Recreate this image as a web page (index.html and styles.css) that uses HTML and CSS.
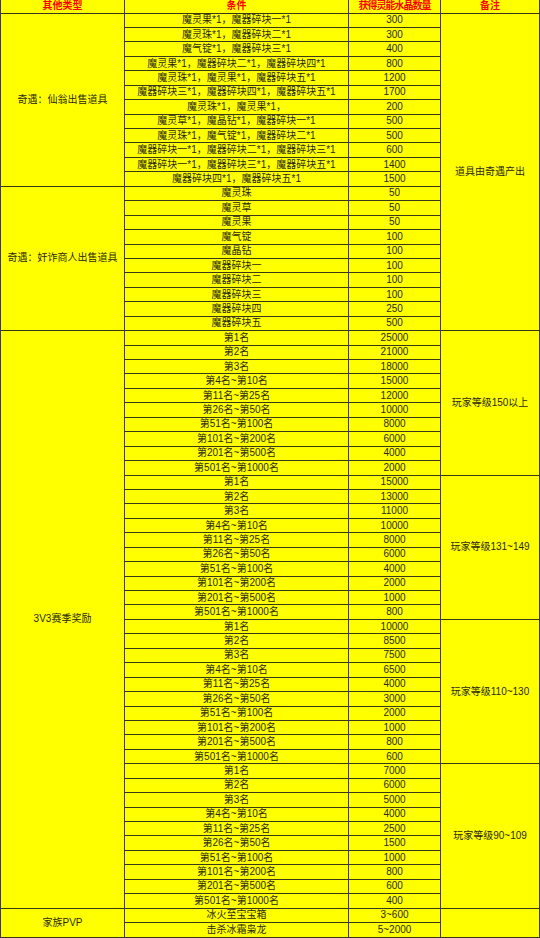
FILE: index.html
```html
<!DOCTYPE html>
<html lang="zh">
<head>
<meta charset="utf-8">
<title>灵能水晶获取</title>
<link rel="stylesheet" href="styles.css">
</head>
<body>
<table class="sheet">
<colgroup><col class="c1"><col class="c2"><col class="c3"><col class="c4"></colgroup>
<thead>
<tr class="head"><th>其他类型</th><th>条件</th><th class="narrow">获得灵能水晶数量</th><th>备注</th></tr>
</thead>
<tbody>
<tr><td rowspan="12">奇遇：仙翁出售道具</td><td>魔灵果*1，魔器碎块一*1</td><td>300</td><td rowspan="22">道具由奇遇产出</td></tr>
<tr><td>魔灵珠*1，魔器碎块二*1</td><td>300</td></tr>
<tr><td>魔气锭*1，魔器碎块三*1</td><td>400</td></tr>
<tr><td>魔灵果*1，魔器碎块二*1，魔器碎块四*1</td><td>800</td></tr>
<tr><td>魔灵珠*1，魔灵果*1，魔器碎块五*1</td><td>1200</td></tr>
<tr><td>魔器碎块三*1，魔器碎块四*1，魔器碎块五*1</td><td>1700</td></tr>
<tr><td>魔灵珠*1，魔灵果*1，</td><td>200</td></tr>
<tr><td>魔灵草*1，魔晶钻*1，魔器碎块一*1</td><td>500</td></tr>
<tr><td>魔灵珠*1，魔气锭*1，魔器碎块二*1</td><td>500</td></tr>
<tr><td>魔器碎块一*1，魔器碎块二*1，魔器碎块三*1</td><td>600</td></tr>
<tr><td>魔器碎块一*1，魔器碎块三*1，魔器碎块五*1</td><td>1400</td></tr>
<tr><td>魔器碎块四*1，魔器碎块五*1</td><td>1500</td></tr>

<tr><td rowspan="10">奇遇：奸诈商人出售道具</td><td>魔灵珠</td><td>50</td></tr>
<tr><td>魔灵草</td><td>50</td></tr>
<tr><td>魔灵果</td><td>50</td></tr>
<tr><td>魔气锭</td><td>100</td></tr>
<tr><td>魔晶钻</td><td>100</td></tr>
<tr><td>魔器碎块一</td><td>100</td></tr>
<tr><td>魔器碎块二</td><td>100</td></tr>
<tr><td>魔器碎块三</td><td>100</td></tr>
<tr><td>魔器碎块四</td><td>250</td></tr>
<tr><td>魔器碎块五</td><td>500</td></tr>

<tr><td rowspan="40">3V3赛季奖励</td><td>第1名</td><td>25000</td><td rowspan="10">玩家等级150以上</td></tr>
<tr><td>第2名</td><td>21000</td></tr>
<tr><td>第3名</td><td>18000</td></tr>
<tr><td>第4名~第10名</td><td>15000</td></tr>
<tr><td>第11名~第25名</td><td>12000</td></tr>
<tr><td>第26名~第50名</td><td>10000</td></tr>
<tr><td>第51名~第100名</td><td>8000</td></tr>
<tr><td>第101名~第200名</td><td>6000</td></tr>
<tr><td>第201名~第500名</td><td>4000</td></tr>
<tr><td>第501名~第1000名</td><td>2000</td></tr>

<tr><td>第1名</td><td>15000</td><td rowspan="10">玩家等级131~149</td></tr>
<tr><td>第2名</td><td>13000</td></tr>
<tr><td>第3名</td><td>11000</td></tr>
<tr><td>第4名~第10名</td><td>10000</td></tr>
<tr><td>第11名~第25名</td><td>8000</td></tr>
<tr><td>第26名~第50名</td><td>6000</td></tr>
<tr><td>第51名~第100名</td><td>4000</td></tr>
<tr><td>第101名~第200名</td><td>2000</td></tr>
<tr><td>第201名~第500名</td><td>1000</td></tr>
<tr><td>第501名~第1000名</td><td>800</td></tr>

<tr><td>第1名</td><td>10000</td><td rowspan="10">玩家等级110~130</td></tr>
<tr><td>第2名</td><td>8500</td></tr>
<tr><td>第3名</td><td>7500</td></tr>
<tr><td>第4名~第10名</td><td>6500</td></tr>
<tr><td>第11名~第25名</td><td>4000</td></tr>
<tr><td>第26名~第50名</td><td>3000</td></tr>
<tr><td>第51名~第100名</td><td>2000</td></tr>
<tr><td>第101名~第200名</td><td>1000</td></tr>
<tr><td>第201名~第500名</td><td>800</td></tr>
<tr><td>第501名~第1000名</td><td>600</td></tr>

<tr><td>第1名</td><td>7000</td><td rowspan="10">玩家等级90~109</td></tr>
<tr><td>第2名</td><td>6000</td></tr>
<tr><td>第3名</td><td>5000</td></tr>
<tr><td>第4名~第10名</td><td>4000</td></tr>
<tr><td>第11名~第25名</td><td>2500</td></tr>
<tr><td>第26名~第50名</td><td>1500</td></tr>
<tr><td>第51名~第100名</td><td>1000</td></tr>
<tr><td>第101名~第200名</td><td>800</td></tr>
<tr><td>第201名~第500名</td><td>600</td></tr>
<tr><td>第501名~第1000名</td><td>400</td></tr>

<tr><td rowspan="2">家族PVP</td><td>冰火至宝宝箱</td><td>3~600</td><td rowspan="2"></td></tr>
<tr><td>击杀冰霜枭龙</td><td>5~2000</td></tr>
</tbody>
</table>
</body>
</html>
```

FILE: styles.css
```css
html, body {
  margin: 0;
  padding: 0;
  background: #ffff00;
}

.sheet {
  width: 539px;
  table-layout: fixed;
  border-collapse: collapse;
  font-family: "Liberation Sans", "Noto Sans CJK SC", sans-serif;
  font-size: 10px;
  color: #2a2a10;
  background: #ffff00;
}

.c1 { width: 124px; }
.c2 { width: 224px; }
.c3 { width: 92px; }
.c4 { width: 99px; }

.sheet th,
.sheet td {
  border: 1px solid #3a3a1a;
  padding: 0;
  text-align: center;
  vertical-align: middle;
  line-height: 12px;
  white-space: nowrap;
  overflow: hidden;
}

.sheet tr {
  height: 14.45px;
}

.sheet .head {
  height: 13px;
}

.sheet th {
  color: #ff0000;
  font-weight: bold;
  font-size: 10px;
  border-top: none;
}

.sheet th.narrow {
  letter-spacing: -1px;
}
```
